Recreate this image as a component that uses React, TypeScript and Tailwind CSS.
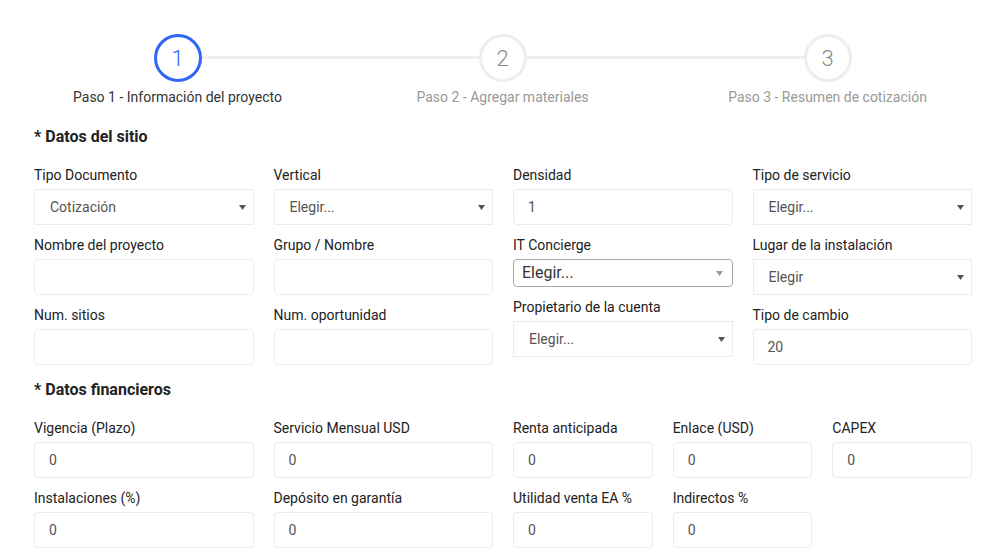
import React from "react";

const font = { fontFamily: "Roboto, 'Liberation Sans', sans-serif" };

type Step = { n: number; label: string; active?: boolean };

const steps: Step[] = [
  { n: 1, label: "Paso 1 - Información del proyecto", active: true },
  { n: 2, label: "Paso 2 - Agregar materiales" },
  { n: 3, label: "Paso 3 - Resumen de cotización" },
];

function Arrow({ light }: { light?: boolean }) {
  return (
    <svg width="7" height="5" viewBox="0 0 7 5" className="shrink-0">
      <path d="M0 0 L7 0 L3.5 5 Z" fill={light ? "#9a9a9a" : "#555"} />
    </svg>
  );
}

function Label({ children }: { children: React.ReactNode }) {
  return <div className="mb-1 text-sm leading-5 text-[#222]">{children}</div>;
}

function TextBox({ value = "" }: { value?: string }) {
  return (
    <div className="flex h-9 items-center rounded-[4px] border border-[#ebebeb] bg-white px-[14px] text-sm text-[#555]">
      {value}
    </div>
  );
}

function SelectBox({ value }: { value: string }) {
  return (
    <div className="flex h-9 items-center justify-between border border-[#ebebeb] bg-white pl-[15px] pr-[7px] text-sm text-[#555]">
      <span>{value}</span>
      <Arrow />
    </div>
  );
}

function PlainSelect({ value }: { value: string }) {
  return (
    <div className="flex h-7 items-center justify-between rounded-[4px] border border-[#a8a8a8] bg-white pl-2 pr-[9px] text-base text-[#333]">
      <span>{value}</span>
      <Arrow light />
    </div>
  );
}

function Field({ label, children }: { label: string; children: React.ReactNode }) {
  return (
    <div className="mb-[10px]">
      <Label>{label}</Label>
      {children}
    </div>
  );
}

export default function App() {
  return (
    <div className="min-h-screen bg-white" style={font}>
      {/* stepper */}
      <div className="relative ml-[15px] w-[975px] pt-[34px]">
        <div className="absolute left-[162px] right-[162px] top-[56px] h-[3px] bg-[#efefef]" />
        <div className="relative grid grid-cols-3">
          {steps.map((s) => (
            <div key={s.n} className="flex flex-col items-center">
              <div
                className={`flex h-12 w-12 items-center justify-center rounded-full border-[3px] bg-white text-[22px] font-light ${
                  s.active ? "border-[#2f66f6] text-[#2f66f6]" : "border-[#eeeeee] text-[#888]"
                }`}
              >
                {s.n}
              </div>
              <div className={`mt-[5px] text-sm leading-5 ${s.active ? "text-[#333]" : "text-[#999]"}`}>
                {s.label}
              </div>
            </div>
          ))}
        </div>
      </div>

      {/* Datos del sitio */}
      <div className="ml-6 w-[958px]">
        <h2 className="mt-[18px] px-[10px] text-base font-bold leading-6 text-[#222]">* Datos del sitio</h2>
        <div className="mt-4 grid grid-cols-4">
          <div className="px-[10px]">
            <Field label="Tipo Documento">
              <SelectBox value="Cotización" />
            </Field>
            <Field label="Nombre del proyecto">
              <TextBox />
            </Field>
            <Field label="Num. sitios">
              <TextBox />
            </Field>
          </div>
          <div className="px-[10px]">
            <Field label="Vertical">
              <SelectBox value="Elegir..." />
            </Field>
            <Field label="Grupo / Nombre">
              <TextBox />
            </Field>
            <Field label="Num. oportunidad">
              <TextBox />
            </Field>
          </div>
          <div className="px-[10px]">
            <Field label="Densidad">
              <TextBox value="1" />
            </Field>
            <Field label="IT Concierge">
              <PlainSelect value="Elegir..." />
            </Field>
            <Field label="Propietario de la cuenta">
              <SelectBox value="Elegir..." />
            </Field>
          </div>
          <div className="px-[10px]">
            <Field label="Tipo de servicio">
              <SelectBox value="Elegir..." />
            </Field>
            <Field label="Lugar de la instalación">
              <SelectBox value="Elegir" />
            </Field>
            <Field label="Tipo de cambio">
              <TextBox value="20" />
            </Field>
          </div>
        </div>

        {/* Datos financieros */}
        <h2 className="mt-[3px] px-[10px] text-base font-bold leading-6 text-[#222]">* Datos financieros</h2>
        <div className="mt-4 grid grid-cols-[3fr_3fr_2fr_2fr_2fr]">
          {[
            "Vigencia (Plazo)",
            "Servicio Mensual USD",
            "Renta anticipada",
            "Enlace (USD)",
            "CAPEX",
            "Instalaciones (%)",
            "Depósito en garantía",
            "Utilidad venta EA %",
            "Indirectos %",
          ].map((l) => (
            <div key={l} className="px-[10px]">
              <Field label={l}>
                <TextBox value="0" />
              </Field>
            </div>
          ))}
        </div>
      </div>
    </div>
  );
}
